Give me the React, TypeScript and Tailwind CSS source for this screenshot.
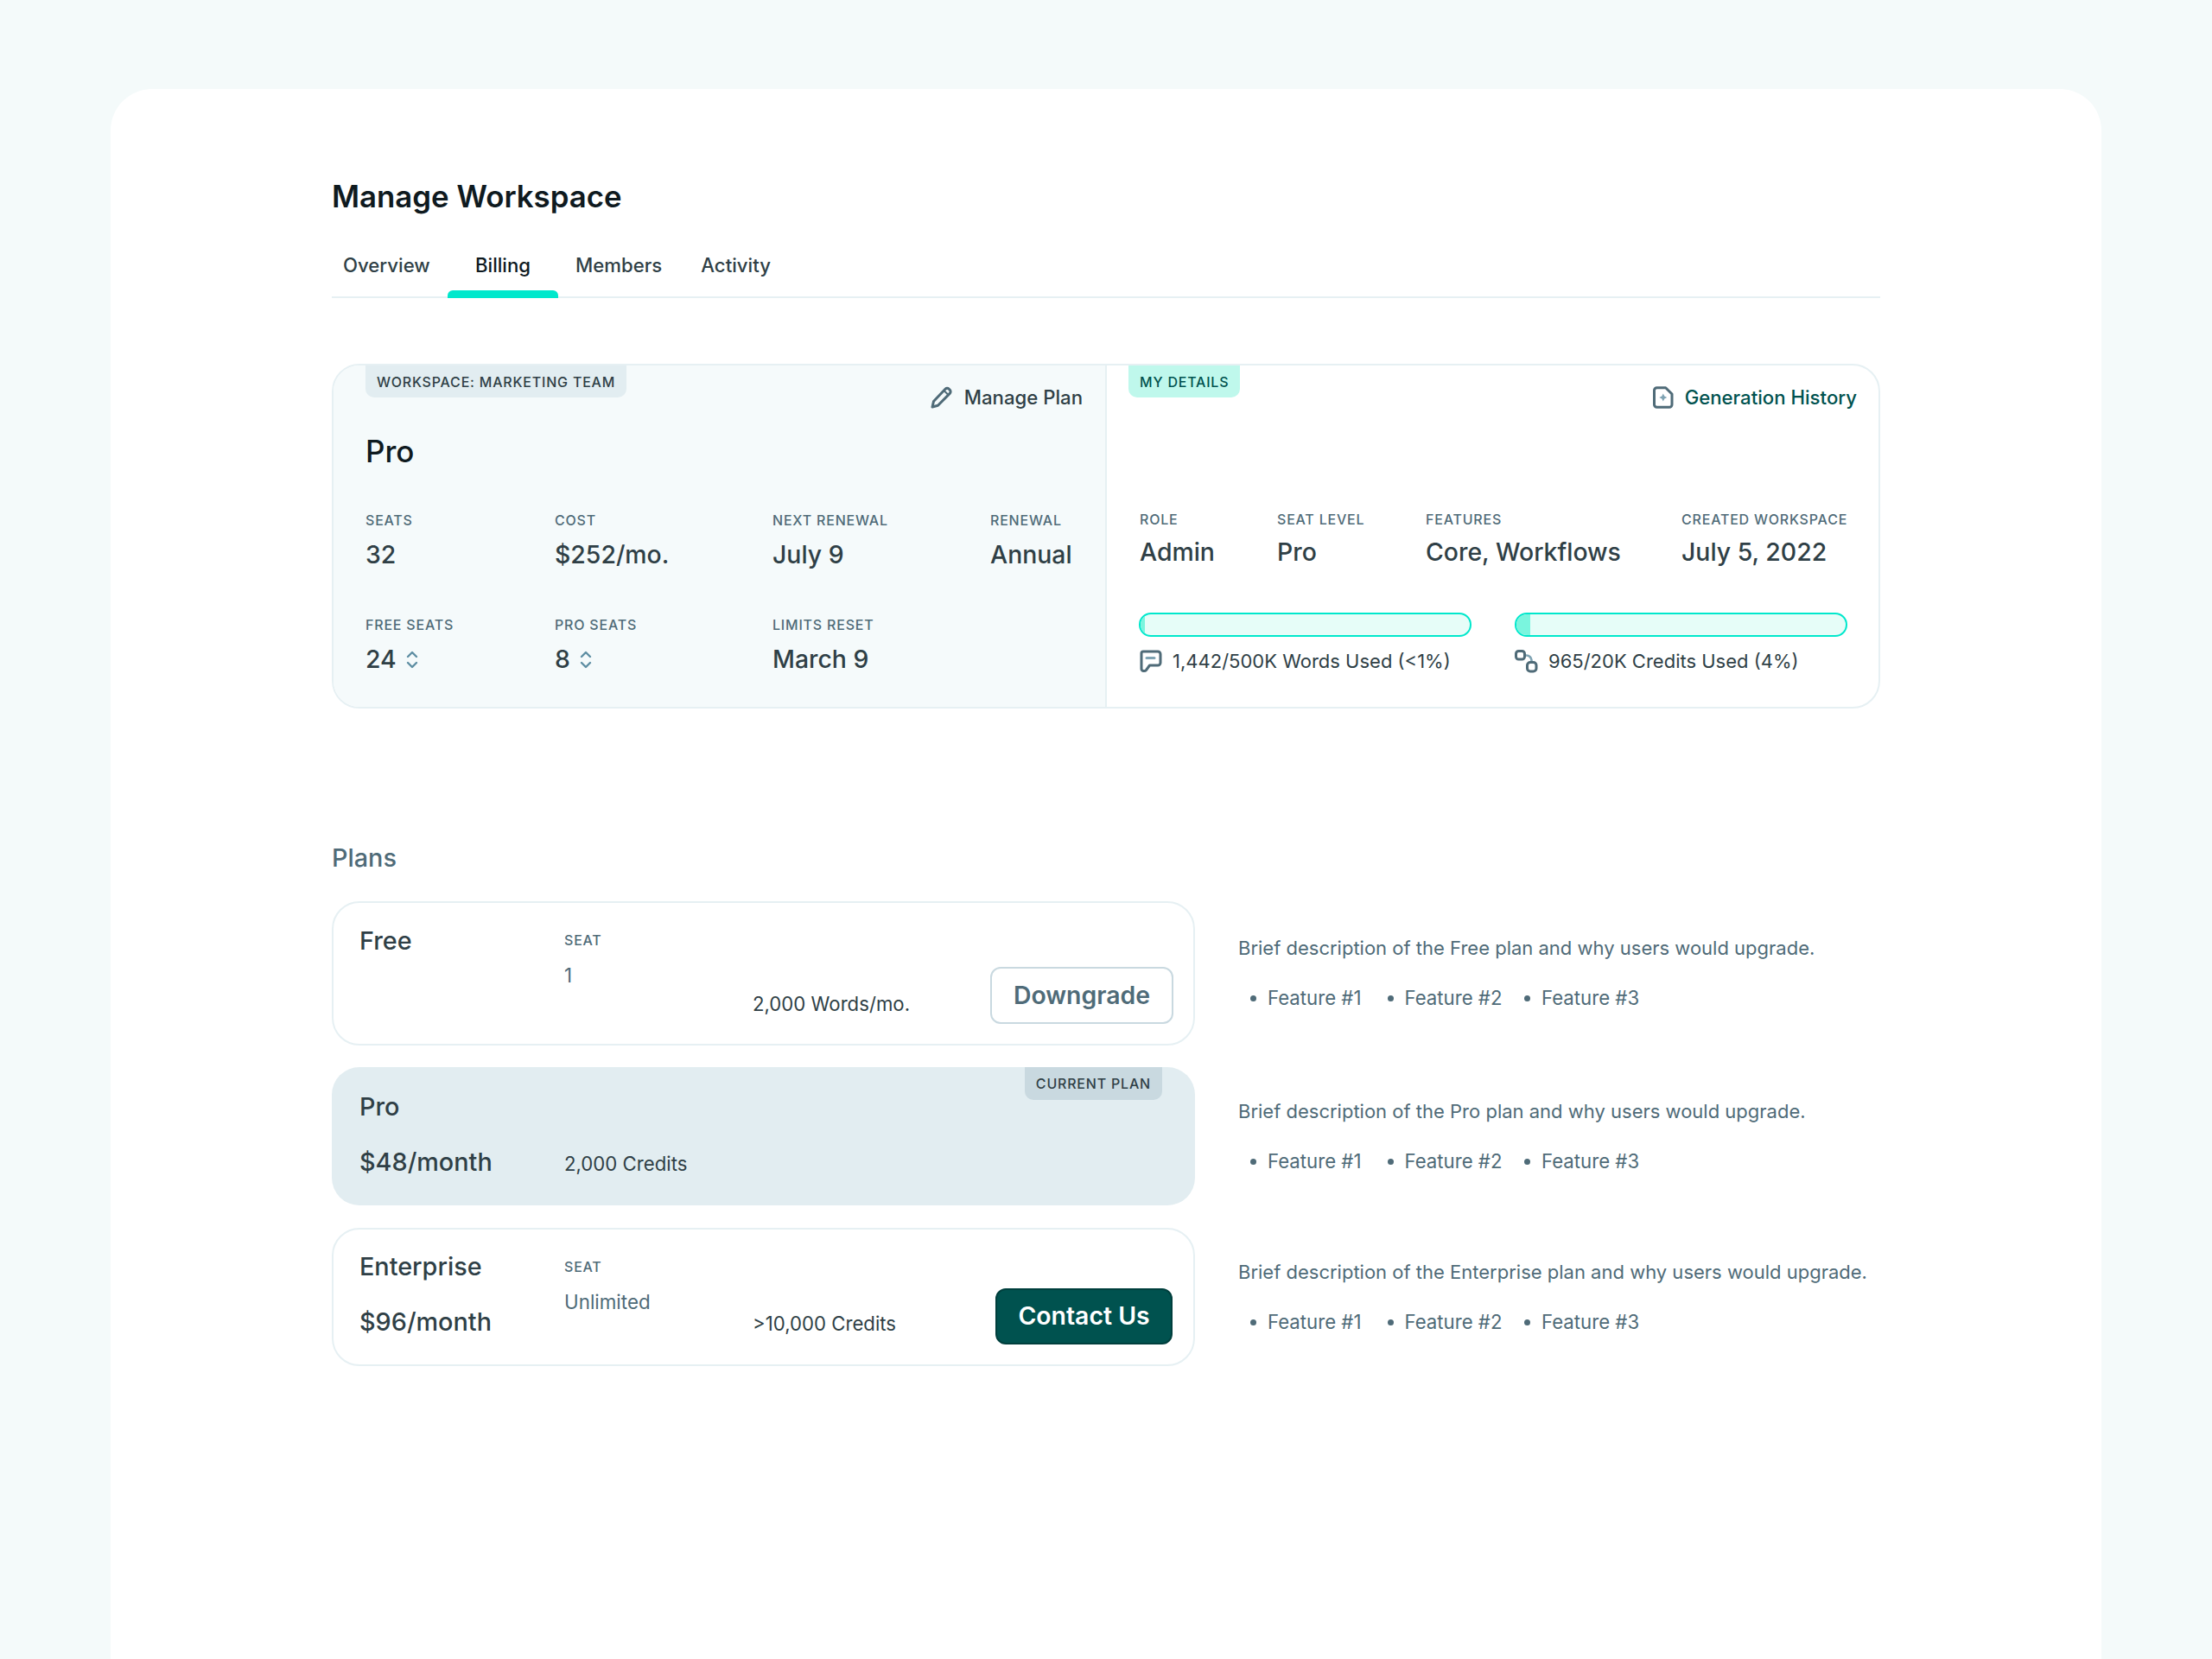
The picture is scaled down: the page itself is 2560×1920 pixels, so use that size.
import React from "react";

const Pencil = () => (
  <svg width="26" height="26" viewBox="0 0 26 26" fill="none" stroke="#4f6b78" strokeWidth="3" strokeLinejoin="round" strokeLinecap="round">
    <path d="M2 24l1.500-6.500L17 3.200a3 3 0 0 1 4.300 0l.9.900a3 3 0 0 1 0 4.300L8.500 22.300z" />
    <path d="M16 5.500l4.500 4.500" strokeWidth="2" />
  </svg>
);
const FileIcon = () => (
  <svg width="24" height="26" viewBox="0 0 24 26" fill="none">
    <path d="M4.500 1.800h10.200L22 9v12.200a3 3 0 0 1-3 3H4.500a3 3 0 0 1-3-3V4.800a3 3 0 0 1 3-3z" stroke="#4f6b78" strokeWidth="3" strokeLinejoin="round" />
    <path d="M11.800 8.500l1.500 3 3 1.500-3 1.500-1.500 3-1.500-3-3-1.500 3-1.500z" fill="#7fa3b3" />
  </svg>
);
const ChatIcon = () => (
  <svg width="27" height="27" viewBox="0 0 27 27" fill="none">
    <path d="M5 2h17a3 3 0 0 1 3 3v10a3 3 0 0 1-3 3H12.500l-4 5.500c-1.500 1.800-5.500 1.300-5.500-1.500V4a2 2 0 0 1 2-2z" stroke="#4f6b78" strokeWidth="3" strokeLinejoin="round" />
    <path d="M9 9.500h9" stroke="#7fa3b3" strokeWidth="3" strokeLinecap="round" />
  </svg>
);
const FlowIcon = () => (
  <svg width="27" height="27" viewBox="0 0 27 27" fill="none">
    <path d="M11 6.500h2.500a6 6 0 0 1 6 6v2" stroke="#7fa3b3" strokeWidth="2.600" />
    <rect x="1.500" y="1.500" width="10" height="9.500" rx="3" stroke="#4f6b78" strokeWidth="3" />
    <rect x="14.500" y="14.500" width="10.500" height="10.500" rx="3.500" stroke="#4f6b78" strokeWidth="3" />
  </svg>
);
const Stepper = () => (
  <svg width="14" height="21" viewBox="0 0 14 21" fill="none" stroke="#5e8ea3" strokeWidth="2.400" strokeLinecap="round" strokeLinejoin="round">
    <path d="M2 7l5-5 5 5" />
    <path d="M2 14l5 5 5-5" />
  </svg>
);

function Stat({ label, value, stepper, tight }: { label: string; value: string; stepper?: boolean; tight?: boolean }) {
  return (
    <div>
      <div className="text-[16px] leading-[20px] font-medium tracking-[0.05em] text-[#4f6b78] uppercase whitespace-nowrap">{label}</div>
      <div className={`${tight ? "mt-[10px]" : "mt-[12px]"} flex items-center gap-[11px] text-[28.400px] leading-[36px] font-medium text-[#2f3f46] whitespace-nowrap`}>
        {value}
        {stepper && <Stepper />}
      </div>
    </div>
  );
}

function Bar({ fill }: { fill: string }) {
  return (
    <div className="h-[28px] w-[385px] rounded-full border-2 border-[#00e8cc] bg-[#e6fdf8] overflow-hidden">
      <div className={`h-full ${fill} bg-[#7af5de]`} />
    </div>
  );
}

function Features() {
  return (
    <div className="mt-[28px] flex text-[22.200px] leading-[28px] text-[#4f6b78]">
      {["Feature #1", "Feature #2", "Feature #3"].map((f) => (
        <div key={f} className="w-[158.500px] flex items-center whitespace-nowrap pl-[14px]">
          <span className="w-[7px] h-[7px] rounded-full bg-[#4f6b78] mr-[13px]" />
          {f}
        </div>
      ))}
    </div>
  );
}

function PlanDesc({ name, top }: { name: string; top: string }) {
  return (
    <div className={top}>
      <div className="text-[22px] leading-[32px] text-[#4f6b78] whitespace-nowrap">
        Brief description of the {name} plan and why users would upgrade.
      </div>
      <Features />
    </div>
  );
}

const Seat = ({ value }: { value: string }) => (
  <div className="w-[218px]">
    <div className="text-[16px] leading-[20px] font-medium tracking-[0.05em] text-[#4f6b78]">SEAT</div>
    <div className="mt-[15px] text-[22.400px] leading-[32px] text-[#4f6b78]">{value}</div>
  </div>
);

export default function App() {
  return (
    <div className="min-h-[1920px] bg-[#f4fafa] pt-[103px] px-[128px] font-['Inter',sans-serif]">
      <div className="h-[1817px] rounded-t-[48px] bg-white pl-[256px] pr-[256px] pt-[100px]">
        <h1 className="text-[34.800px] leading-[48px] font-semibold text-[#0f1a1f]">Manage Workspace</h1>

        <div className="mt-[36px] h-[58px] flex border-b-2 border-[#e6f0f3] text-[22.200px] font-medium text-[#2f3f46]">
          <div className="ml-[13px] w-[101px] pt-[4px] leading-[32px]">Overview</div>
          <div className="ml-[20px] w-[128px] h-[58px] flex flex-col items-center justify-between text-[#0f1a1f]">
            <div className="pt-[4px] leading-[32px]">Billing</div>
            <div className="w-full h-[9px] rounded-t-[6px] bg-[#00e8cc]" />
          </div>
          <div className="ml-[20px] pt-[4px] leading-[32px]">Members</div>
          <div className="ml-[45px] pt-[4px] leading-[32px]">Activity</div>
        </div>

        <div className="mt-[76px] h-[399px] w-full flex rounded-[32px] border-2 border-[#e6f0f3] overflow-hidden">
          <div className="w-[895px] bg-[#f5fafb] border-r-2 border-[#e6f0f3] pl-[37px] pr-[26px]">
            <div className="flex justify-between items-start">
              <div className="h-[37px] px-[13px] flex items-center rounded-b-[10px] bg-[#e2edf1] text-[16px] font-medium tracking-[0.05em] text-[#2f3f46] whitespace-nowrap">
                WORKSPACE: MARKETING TEAM
              </div>
              <div className="mt-[23px] flex items-center gap-[13px] text-[22.200px] leading-[28px] font-medium text-[#2f3f46]">
                <Pencil /> Manage Plan
              </div>
            </div>
            <div className="mt-[26px] text-[35px] leading-[44px] font-medium text-[#0f1a1f]">Pro</div>
            <div className="mt-[48px] grid grid-cols-[219px_252px_252px_1fr] gap-y-[53px]">
              <Stat label="Seats" value="32" />
              <Stat label="Cost" value="$252/mo." />
              <Stat label="Next Renewal" value="July 9" />
              <Stat label="Renewal" value="Annual" />
              <Stat label="Free Seats" value="24" stepper />
              <Stat label="Pro Seats" value="8" stepper />
              <Stat label="Limits Reset" value="March 9" />
            </div>
          </div>
          <div className="flex-1 pl-[25px] pr-[25px]">
            <div className="flex justify-between items-start">
              <div className="h-[37px] px-[13px] flex items-center rounded-b-[10px] bg-[#bff8ec] text-[16px] font-medium tracking-[0.05em] text-[#00524f] whitespace-nowrap">
                MY DETAILS
              </div>
              <div className="mt-[23px] flex items-center gap-[13px] text-[22.200px] leading-[28px] font-medium text-[#00524f]">
                <FileIcon /> Generation History
              </div>
            </div>
            <div className="ml-[13px] mt-[117px] grid grid-cols-[159px_172px_296px_1fr]">
              <Stat tight label="Role" value="Admin" />
              <Stat tight label="Seat Level" value="Pro" />
              <Stat tight label="Features" value="Core, Workflows" />
              <Stat tight label="Created Workspace" value="July 5, 2022" />
            </div>
            <div className="ml-[12px] mt-[52px] flex gap-[50px]">
              <div>
                <Bar fill="w-[5px]" />
                <div className="mt-[14px] flex items-center gap-[12px] text-[22px] leading-[28px] text-[#2f3f46] whitespace-nowrap">
                  <ChatIcon /> 1,442/500K Words Used (&lt;1%)
                </div>
              </div>
              <div>
                <Bar fill="w-[16px]" />
                <div className="mt-[14px] flex items-center gap-[12px] text-[22px] leading-[28px] text-[#2f3f46] whitespace-nowrap">
                  <FlowIcon /> 965/20K Credits Used (4%)
                </div>
              </div>
            </div>
          </div>
        </div>

        <h2 className="mt-[155px] text-[28.800px] leading-[36px] font-medium text-[#4f6b78]">Plans</h2>

        <div className="mt-[32px] grid grid-cols-[999px_1fr] gap-x-[50px] gap-y-[25px] auto-rows-min">
          <div className="h-[167px] rounded-[32px] border-2 border-[#e6f0f3] pl-[30px] pt-[24px] flex">
            <div className="w-[237px] text-[28.800px] leading-[40px] font-medium text-[#2f3f46]">Free</div>
            <div className="pt-[9px]"><Seat value="1" /></div>
            <div className="w-[275px] pt-[77px] text-[22.200px] leading-[32px] text-[#2f3f46] whitespace-nowrap">2,000 Words/mo.</div>
            <div className="mt-[50px] h-[66px] w-[212px] flex items-center justify-center rounded-[12px] border-2 border-[#c9d9e0] text-[28.400px] font-semibold text-[#4f6b78]">Downgrade</div>
          </div>
          <PlanDesc name="Free" top="pt-[38px]" />

          <div className="h-[160px] mb-[1px] rounded-[32px] bg-[#e2edf1] pl-[32px] pr-[38px] flex justify-between items-start">
            <div className="pt-[26px]">
              <div className="text-[28.800px] leading-[40px] font-medium text-[#2f3f46]">Pro</div>
              <div className="mt-[24px] flex">
                <div className="w-[237px] text-[28.800px] leading-[40px] font-medium text-[#2f3f46]">$48/month</div>
                <div className="pt-[6px] text-[22.200px] leading-[32px] text-[#2f3f46] whitespace-nowrap">2,000 Credits</div>
              </div>
            </div>
            <div className="h-[38px] px-[13px] flex items-center rounded-b-[10px] bg-[#c9d9e0] text-[16px] font-medium tracking-[0.05em] text-[#2f3f46] whitespace-nowrap">CURRENT PLAN</div>
          </div>
          <PlanDesc name="Pro" top="pt-[35px]" />

          <div className="h-[160px] rounded-[32px] border-2 border-[#e6f0f3] pl-[30px] pt-[23px] flex">
            <div className="w-[237px]">
              <div className="text-[28.800px] leading-[40px] font-medium text-[#2f3f46] whitespace-nowrap">Enterprise</div>
              <div className="mt-[24px] text-[28.800px] leading-[40px] font-medium text-[#2f3f46] whitespace-nowrap">$96/month</div>
            </div>
            <div className="pt-[10px]"><Seat value="Unlimited" /></div>
            <div className="w-[281px] pt-[70px] text-[22.200px] leading-[32px] text-[#2f3f46] whitespace-nowrap">&gt;10,000 Credits</div>
            <div className="mt-[45px] h-[65px] w-[205px] flex items-center justify-center rounded-[12px] border-2 border-[#003f3d] bg-[#00524f] text-[28.400px] font-semibold text-white">Contact Us</div>
          </div>
          <PlanDesc name="Enterprise" top="pt-[35px]" />
        </div>
      </div>
    </div>
  );
}
